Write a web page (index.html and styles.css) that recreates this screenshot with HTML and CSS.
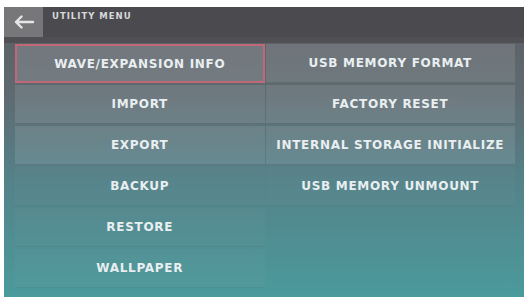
FILE: index.html
```html
<!DOCTYPE html>
<html>
<head>
<meta charset="utf-8">
<link rel="stylesheet" href="styles.css">
</head>
<body>
<div class="screen">
  <div class="header">
    <div class="back">
      <svg width="22" height="14" viewBox="0 0 22 14"><path d="M20 7H3M8.5 1.5L3 7l5.5 5.5" fill="none" stroke="#e6e6e6" stroke-width="2.4" stroke-linecap="round" stroke-linejoin="round"/></svg>
    </div>
    <div class="title">UTILITY MENU</div>
  </div>
  <div class="subbar"></div>
  <div class="grid">
    <div class="col">
      <div class="btn sel">WAVE/EXPANSION INFO</div>
      <div class="btn">IMPORT</div>
      <div class="btn">EXPORT</div>
      <div class="btn faint">BACKUP</div>
      <div class="btn faint">RESTORE</div>
      <div class="btn faint">WALLPAPER</div>
    </div>
    <div class="col">
      <div class="btn">USB MEMORY FORMAT</div>
      <div class="btn">FACTORY RESET</div>
      <div class="btn">INTERNAL STORAGE INITIALIZE</div>
      <div class="btn faint">USB MEMORY UNMOUNT</div>
      <div class="btn empty"></div>
      <div class="btn empty"></div>
    </div>
  </div>
</div>
</body>
</html>
```
FILE: styles.css
```css
html, body { margin: 0; padding: 0; background: #fff; }
body { padding: 7px 4px 4px 4px; font-family: "DejaVu Sans", "Liberation Sans", sans-serif; }
.screen {
  width: 520px; height: 290px;
  background: linear-gradient(180deg, #5c5f63 0%, #5e6a70 30%, #548289 60%, #4b9a9c 100%);
  display: flex; flex-direction: column;
  overflow: hidden;
}
.header { height: 30px; background: #4b4b4f; display: flex; align-items: stretch; }
.back { width: 39px; background: #77777a; display: flex; align-items: center; justify-content: center; }
.title { color: #d8d8da; font-size: 8.5px; font-weight: bold; padding: 4px 0 0 9px; letter-spacing: 1px; }
.subbar { height: 6px; background: #504f53; }
.grid { display: flex; padding: 1px 9px 0 11px; gap: 1px; }
.col { flex: 1; display: flex; flex-direction: column; gap: 2px; }
.btn {
  height: 39px; display: flex; align-items: center; justify-content: center;
  color: #e9eff1; font-size: 12px; font-weight: bold; letter-spacing: 0.7px;
  background: rgba(200, 205, 210, 0.16);
  border-bottom: 1px solid rgba(60, 70, 75, 0.25);
  box-sizing: border-box;
}
.btn.sel { border: 2px solid #c06878; background: rgba(190, 190, 195, 0.22); }
.btn.faint { background: rgba(200, 210, 215, 0.04); border-bottom-color: rgba(60, 70, 75, 0.12); }
.btn.empty { background: transparent; border-bottom-color: transparent; }
```
